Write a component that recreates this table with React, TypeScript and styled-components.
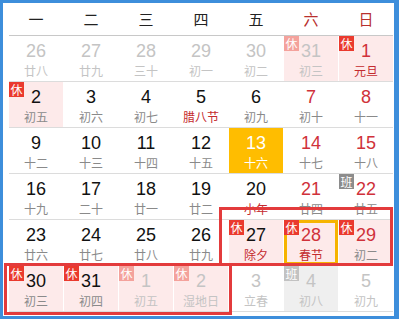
import React from "react";
import styled, { createGlobalStyle } from "styled-components";

const GlobalStyle = createGlobalStyle`
  html, body { margin: 0; padding: 0; background: #fff; }
  body { font-family: "Liberation Sans", "Noto Sans CJK SC", sans-serif; }
`;

const Frame = styled.div`
  position: relative;
  width: 399px;
  height: 319px;
  box-sizing: border-box;
  border: 3px solid #3d8edb;
  border-right-width: 5px;
  background: #fff;
  padding-left: 6px;
`;

const Grid = styled.div`
  width: 384px;
  display: grid;
  grid-template-columns: repeat(7, 54px);
  column-gap: 1px;
`;

const Header = styled(Grid)`
  height: 32px;
  align-items: center;
  border-bottom: 1px solid #c8c8c8;
`;

const WeekDay = styled.div<{ $weekend?: boolean }>`
  text-align: center;
  font-family: "Noto Sans CJK SC", sans-serif;
  font-size: 15px;
  line-height: 20px;
  color: ${(p) => (p.$weekend ? "#b8302e" : "#222")};
`;

const WeekRow = styled(Grid)`
  height: 45px;
  border-bottom: 1px solid #dcdcdc;
  &:last-child { border-bottom: none; }
`;

const Cell = styled.div<{ $bg: string; $selected?: boolean }>`
  position: relative;
  background: ${(p) => p.$bg};
  text-align: center;
  box-shadow: ${(p) => (p.$selected ? "inset 0 0 0 3px #f6b400" : "none")};
`;

const Num = styled.div<{ $color: string }>`
  padding-top: 4px;
  font-family: "Liberation Sans", Arial, sans-serif;
  font-size: 18px;
  line-height: 22px;
  color: ${(p) => p.$color};
`;

const Lunar = styled.div<{ $color: string }>`
  font-family: "Noto Sans CJK SC", sans-serif;
  font-size: 12px;
  line-height: 18px;
  color: ${(p) => p.$color};
`;

const Badge = styled.span<{ $bg: string }>`
  position: absolute;
  top: 0;
  left: 0;
  width: 15px;
  height: 15px;
  background: ${(p) => p.$bg};
  color: #fff;
  font-family: "Noto Sans CJK SC", sans-serif;
  font-size: 12px;
  line-height: 15px;
  text-align: center;
  z-index: 1;
`;

const Highlight = styled.div`
  position: absolute;
  box-sizing: border-box;
  border: 3px solid #e33b3c;
  pointer-events: none;
  z-index: 2;
`;

const SpringHighlight = styled(Highlight)`
  left: 216px;
  top: 204px;
  width: 174px;
  height: 59px;
`;

const MonthEndHighlight = styled(Highlight)`
  left: 1px;
  top: 260px;
  width: 228px;
  height: 52px;
`;

type Kind = "prev" | "cur" | "next";
type Day = {
  n: number;
  l: string;
  kind: Kind;
  red?: boolean;
  lred?: boolean;
  pink?: boolean;
  badge?: "休" | "班";
  today?: boolean;
  selected?: boolean;
  grayBg?: boolean;
};

const days: Day[] = [
  { n: 26, l: "廿八", kind: "prev" },
  { n: 27, l: "廿九", kind: "prev" },
  { n: 28, l: "三十", kind: "prev" },
  { n: 29, l: "初一", kind: "prev" },
  { n: 30, l: "初二", kind: "prev" },
  { n: 31, l: "初三", kind: "prev", pink: true, badge: "休" },
  { n: 1, l: "元旦", kind: "cur", red: true, lred: true, pink: true, badge: "休" },

  { n: 2, l: "初五", kind: "cur", pink: true, badge: "休" },
  { n: 3, l: "初六", kind: "cur" },
  { n: 4, l: "初七", kind: "cur" },
  { n: 5, l: "腊八节", kind: "cur", lred: true },
  { n: 6, l: "初九", kind: "cur" },
  { n: 7, l: "初十", kind: "cur", red: true },
  { n: 8, l: "十一", kind: "cur", red: true },

  { n: 9, l: "十二", kind: "cur" },
  { n: 10, l: "十三", kind: "cur" },
  { n: 11, l: "十四", kind: "cur" },
  { n: 12, l: "十五", kind: "cur" },
  { n: 13, l: "十六", kind: "cur", today: true },
  { n: 14, l: "十七", kind: "cur", red: true },
  { n: 15, l: "十八", kind: "cur", red: true },

  { n: 16, l: "十九", kind: "cur" },
  { n: 17, l: "二十", kind: "cur" },
  { n: 18, l: "廿一", kind: "cur" },
  { n: 19, l: "廿二", kind: "cur" },
  { n: 20, l: "小年", kind: "cur", lred: true },
  { n: 21, l: "廿四", kind: "cur", red: true },
  { n: 22, l: "廿五", kind: "cur", red: true, badge: "班" },

  { n: 23, l: "廿六", kind: "cur" },
  { n: 24, l: "廿七", kind: "cur" },
  { n: 25, l: "廿八", kind: "cur" },
  { n: 26, l: "廿九", kind: "cur" },
  { n: 27, l: "除夕", kind: "cur", lred: true, pink: true, badge: "休" },
  { n: 28, l: "春节", kind: "cur", red: true, lred: true, pink: true, badge: "休", selected: true },
  { n: 29, l: "初二", kind: "cur", red: true, pink: true, badge: "休" },

  { n: 30, l: "初三", kind: "cur", pink: true, badge: "休" },
  { n: 31, l: "初四", kind: "cur", pink: true, badge: "休" },
  { n: 1, l: "初五", kind: "next", pink: true, badge: "休" },
  { n: 2, l: "湿地日", kind: "next", pink: true, badge: "休" },
  { n: 3, l: "立春", kind: "next" },
  { n: 4, l: "初八", kind: "next", grayBg: true, badge: "班" },
  { n: 5, l: "初九", kind: "next" },
];

const weekDays = ["一", "二", "三", "四", "五", "六", "日"];

function numColor(d: Day) {
  if (d.today) return "#fff";
  if (d.kind !== "cur") return "#c4c4c4";
  if (d.red) return "#d0313a";
  return "#111";
}

function lunarColor(d: Day) {
  if (d.today) return "#fff";
  if (d.kind !== "cur") return "#c4c4c4";
  if (d.lred) return "#c42a2e";
  return "#8a8a8a";
}

function bgColor(d: Day) {
  if (d.today) return "#ffbd00";
  if (d.pink) return "#fdeaea";
  if (d.grayBg) return "#efefef";
  return "#fff";
}

function badgeColor(d: Day) {
  const faded = d.kind !== "cur";
  if (d.badge === "班") return faded ? "#c2c2c2" : "#8c8c8c";
  return faded ? "#f4a29c" : "#ea3a2e";
}

export default function App() {
  const rows: Day[][] = [];
  for (let i = 0; i < days.length; i += 7) rows.push(days.slice(i, i + 7));
  return (
    <>
      <GlobalStyle />
      <Frame>
        <Header>
          {weekDays.map((w, i) => (
            <WeekDay key={w} $weekend={i >= 5}>
              {w}
            </WeekDay>
          ))}
        </Header>
        {rows.map((row, ri) => (
          <WeekRow key={ri}>
            {row.map((d, ci) => (
              <Cell key={ci} $bg={bgColor(d)} $selected={d.selected}>
                {d.badge && <Badge $bg={badgeColor(d)}>{d.badge}</Badge>}
                <Num $color={numColor(d)}>{d.n}</Num>
                <Lunar $color={lunarColor(d)}>{d.l}</Lunar>
              </Cell>
            ))}
          </WeekRow>
        ))}
        <SpringHighlight />
        <MonthEndHighlight />
      </Frame>
    </>
  );
}
